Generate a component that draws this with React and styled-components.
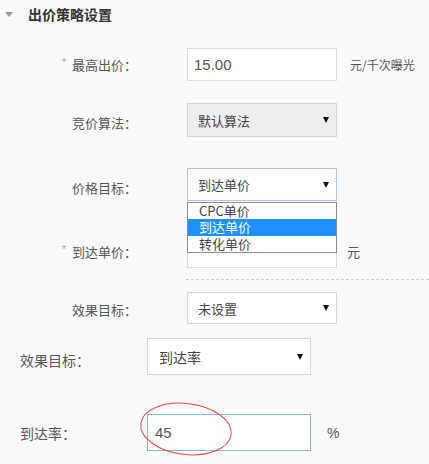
import React from 'react';
import styled, { createGlobalStyle } from 'styled-components';

const Global = createGlobalStyle`
  html, body { margin: 0; padding: 0; background: #fafafa; }
  body { font-family: "Noto Sans CJK SC", "Noto Sans", sans-serif; color: #555; }
  * { box-sizing: border-box; }
`;

const Page = styled.div`
  width: 429px;
  height: 464px;
  overflow: hidden;
  background: #fafafa;
  display: flex;
  flex-direction: column;
`;

const Header = styled.div`
  height: 28px;
  display: flex;
  align-items: center;
  gap: 15px;
  padding-left: 5px;
`;

const Caret = styled.span`
  width: 0;
  height: 0;
  border-left: 4px solid transparent;
  border-right: 4px solid transparent;
  border-top: 5px solid #999;
`;

const Title = styled.h3`
  margin: 0;
  font-size: 14px;
  line-height: 16px;
  font-weight: bold;
  color: #333;
`;

const Row = styled.div`
  display: flex;
  align-items: center;
  height: ${p => p.$h}px;
  margin-top: ${p => p.$mt}px;
  flex-shrink: 0;
`;

const Label = styled.label`
  width: ${p => p.$w}px;
  flex-shrink: 0;
  display: flex;
  align-items: center;
  padding-left: ${p => p.$pl}px;
  padding-top: ${p => (p.$shift || 0) * 2}px;
  font-size: ${p => p.$fs}px;
  line-height: 16px;
  color: #555;
  white-space: nowrap;
`;

const Star = styled.span`
  width: 10px;
  margin-left: -10px;
  align-self: flex-start;
  margin-top: ${p => (p.$shift || 0) * 2 - 3}px;
  color: #f0905a;
  font-family: "Liberation Sans", sans-serif;
  font-size: 11px;
  line-height: 16px;
`;

const Field = styled.div`
  position: relative;
  width: ${p => p.$w}px;
  height: 100%;
  flex-shrink: 0;
`;

const TextInput = styled.input`
  width: 100%;
  height: 100%;
  margin: 0;
  padding: 0 0 0 ${p => p.$pl}px;
  border: 1px solid ${p => (p.$focus ? '#80b9ee' : '#dcdcdc')};
  background: #fff;
  outline: none;
  font-family: "Liberation Sans", Arial, sans-serif;
  font-size: 15px;
  color: #555;
`;

const SelectBox = styled.div`
  width: 100%;
  height: 100%;
  display: flex;
  align-items: center;
  justify-content: space-between;
  padding: 0 7px 0 ${p => p.$pl}px;
  border: 1px solid ${p => (p.$focus ? '#a9c8ef' : '#d6d6d6')};
  background: ${p => (p.$disabled ? '#eeeeee' : '#fff')};
  font-size: ${p => p.$fs}px;
  color: #444;
`;

const Arrow = styled.span`
  width: 0;
  height: 0;
  border-left: 3.5px solid transparent;
  border-right: 3.5px solid transparent;
  border-top: 6px solid #111;
`;

const Menu = styled.ul`
  position: absolute;
  top: 100%;
  left: 0;
  width: 100%;
  margin: 1px 0 0;
  padding: 0;
  list-style: none;
  border: 1px solid #8c8c8c;
  background: #fff;
  z-index: 2;
`;

const Option = styled.li`
  height: 16.4px;
  line-height: 16px;
  padding-left: 11px;
  font-size: 13px;
  color: ${p => (p.$active ? '#fff' : '#444')};
  background: ${p => (p.$active ? '#1e90ff' : 'transparent')};
`;

const Unit = styled.span`
  margin-left: ${p => p.$ml}px;
  font-size: ${p => p.$fs}px;
  color: #555;
  font-family: ${p => (p.$latin ? '"Liberation Sans", Arial, sans-serif' : 'inherit')};
  white-space: nowrap;
`;

const Divider = styled.div`
  margin: 11px 0 0 186px;
  height: 0;
  border-top: 1px dashed #cfcfcf;
  flex-shrink: 0;
`;

const Circle = styled.svg`
  position: absolute;
  left: -8px;
  top: -13px;
  width: 94px;
  height: 56px;
  overflow: visible;
  pointer-events: none;
`;

const Select = ({ value, disabled, focus, fs = 13, pl = 10, children }) => (
  <SelectBox $disabled={disabled} $focus={focus} $fs={fs} $pl={pl}>
    <span>{value}</span>
    <Arrow />
    {children}
  </SelectBox>
);

export default function App() {
  return (
    <Page>
      <Global />
      <Header>
        <Caret />
        <Title>出价策略设置</Title>
      </Header>

      <Row $h={33} $mt={20}>
        <Label $w={187} $pl={72} $fs={13}>
          <Star>*</Star>最高出价：
        </Label>
        <Field $w={150}>
          <TextInput defaultValue="15.00" $pl={6} />
        </Field>
        <Unit $ml={13} $fs={12}>元/千次曝光</Unit>
      </Row>

      <Row $h={34} $mt={22}>
        <Label $w={187} $pl={72} $fs={13} $shift={3}>竞价算法：</Label>
        <Field $w={150}>
          <Select value="默认算法" disabled />
        </Field>
      </Row>

      <Row $h={33} $mt={31}>
        <Label $w={187} $pl={72} $fs={13} $shift={3}>价格目标：</Label>
        <Field $w={150}>
          <Select value="到达单价" focus>
          </Select>
          <Menu>
            <Option>CPC单价</Option>
            <Option $active>到达单价</Option>
            <Option>转化单价</Option>
          </Menu>
        </Field>
      </Row>

      <Row $h={33} $mt={34}>
        <Label $w={187} $pl={72} $fs={13}>
          <Star>*</Star>到达单价：
        </Label>
        <Field $w={150}>
          <TextInput defaultValue="" $pl={6} />
        </Field>
        <Unit $ml={10} $fs={13}>元</Unit>
      </Row>

      <Divider />

      <Row $h={32} $mt={12}>
        <Label $w={187} $pl={72} $fs={13} $shift={2}>效果目标：</Label>
        <Field $w={150}>
          <Select value="未设置" />
        </Field>
      </Row>

      <Row $h={37} $mt={14}>
        <Label $w={147} $pl={20} $fs={14} $shift={3}>效果目标：</Label>
        <Field $w={164}>
          <Select value="到达率" fs={14} pl={11} />
        </Field>
      </Row>

      <Row $h={37} $mt={39}>
        <Label $w={147} $pl={20} $fs={14}>到达率：</Label>
        <Field $w={164}>
          <TextInput defaultValue="45" $pl={7} $focus />
          <Circle viewBox="0 0 94 56">
            <ellipse
              cx="47"
              cy="28"
              rx="45.5"
              ry="25.5"
              transform="rotate(7 47 28)"
              fill="none"
              stroke="#e5484d"
              strokeWidth="1"
            />
          </Circle>
        </Field>
        <Unit $ml={16} $fs={14} $latin>%</Unit>
      </Row>
    </Page>
  );
}
